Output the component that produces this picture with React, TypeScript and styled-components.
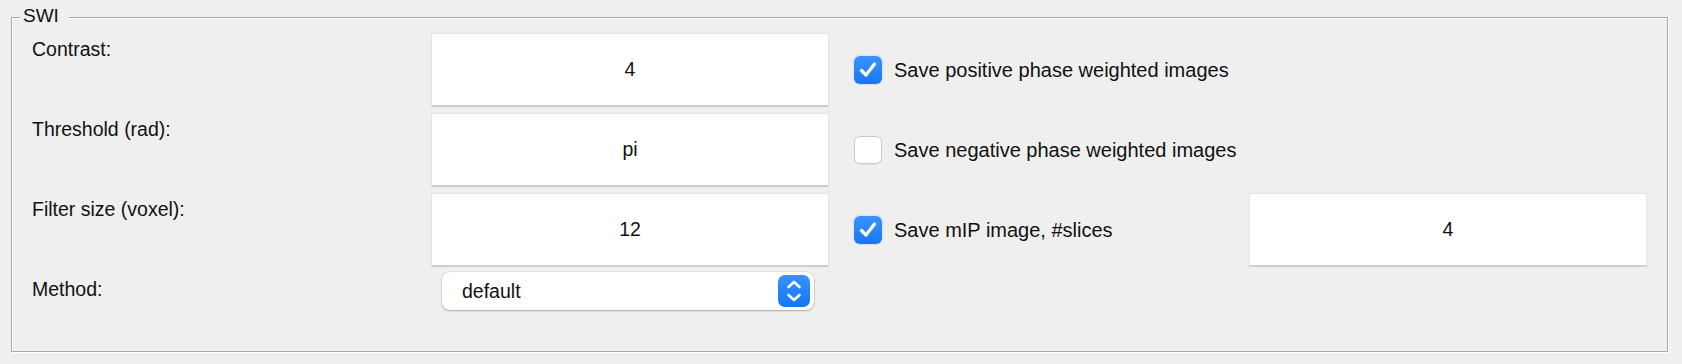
import React from "react";
import styled, { createGlobalStyle } from "styled-components";

const Global = createGlobalStyle`
  html, body { margin: 0; padding: 0; background: #efefef; }
  body { font-family: "Liberation Sans", Arial, sans-serif; color: #111; }
`;

const Page = styled.div`
  width: 1682px;
  height: 364px;
  padding: 17px 0 0 11px;
  box-sizing: border-box;
  background: #efefef;
`;

const Frame = styled.section`
  position: relative;
  width: 1657px;
  height: 335px;
  box-sizing: border-box;
  border: 1px solid #a9a9a9;
  box-shadow: 1px 1px 0 #ffffff, inset 1px 1px 0 #ffffff;
  padding: 15px 19px 0 20px;
`;

const Legend = styled.span`
  position: absolute;
  top: -13px;
  left: 8px;
  padding: 0 10px 0 3px;
  background: #efefef;
  font-size: 19px;
  line-height: 22px;
  color: #111;
`;

const Grid = styled.div`
  display: grid;
  grid-template-columns: 399px 398px 420px 398px;
  grid-auto-rows: 74px;
  row-gap: 6px;
  & > :nth-child(4n + 3) {
    padding-left: 25px;
  }
`;

const Label = styled.div`
  font-size: 19.5px;
  line-height: 24px;
  padding-top: 4px;
`;

const Field = styled.div`
  background: #fff;
  border: 1px solid #e2e2e2;
  border-bottom: 2px solid #cfcfcf;
  box-sizing: border-box;
  display: flex;
  align-items: center;
  justify-content: center;
  font-size: 19.5px;
  color: #111;
`;

const Empty = styled.div``;

const CheckRow = styled.label`
  display: flex;
  align-items: center;
  gap: 12px;
  font-size: 20px;
  color: #111;
`;

const Box = styled.span<{ $on: boolean }>`
  width: 28px;
  height: 28px;
  flex: none;
  box-sizing: border-box;
  border-radius: 6px;
  display: flex;
  align-items: center;
  justify-content: center;
  background: ${(p) => (p.$on ? "linear-gradient(#3b93ff, #1677f5)" : "#fff")};
  border: ${(p) => (p.$on ? "none" : "1px solid #c9c9c9")};
  box-shadow: ${(p) => (p.$on ? "0 0 2px rgba(20,110,240,0.35)" : "0 1px 1px rgba(0,0,0,0.05)")};
`;

const SelectWrap = styled.div`
  align-self: start;
  margin: -1px 0 0 11px;
  width: 372px;
  height: 38px;
  box-sizing: border-box;
  background: #fff;
  border-radius: 8px;
  box-shadow: 0 0 0 0.5px rgba(0, 0, 0, 0.12), 0 1px 2px rgba(0, 0, 0, 0.25);
  display: flex;
  align-items: center;
  justify-content: space-between;
  padding: 0 4px 0 20px;
  font-size: 19.5px;
  color: #111;
`;

const Stepper = styled.span`
  width: 32px;
  height: 32px;
  border-radius: 7px;
  background: linear-gradient(#3a92ff, #1575f5);
  display: flex;
  align-items: center;
  justify-content: center;
`;

const Check = () => (
  <svg width="20" height="20" viewBox="0 0 20 20">
    <path d="M3.5 10.5 L8 15 L16.5 4" fill="none" stroke="#fff" strokeWidth="3.2" strokeLinecap="round" strokeLinejoin="round" />
  </svg>
);

const Chevrons = () => (
  <svg width="20" height="26" viewBox="0 0 20 26">
    <path d="M4.5 9 L10 4 L15.5 9" fill="none" stroke="#fff" strokeWidth="2.6" strokeLinecap="round" strokeLinejoin="round" />
    <path d="M4.5 17 L10 22 L15.5 17" fill="none" stroke="#fff" strokeWidth="2.6" strokeLinecap="round" strokeLinejoin="round" />
  </svg>
);

const CheckItem = ({ on, text }: { on: boolean; text: string }) => (
  <CheckRow>
    <Box $on={on}>{on && <Check />}</Box>
    {text}
  </CheckRow>
);

export default function App() {
  return (
    <>
      <Global />
      <Page>
        <Frame>
          <Legend>SWI</Legend>
          <Grid>
            <Label>Contrast:</Label>
            <Field>4</Field>
            <CheckItem on text="Save positive phase weighted images" />
            <Empty />

            <Label>Threshold (rad):</Label>
            <Field>pi</Field>
            <CheckItem on={false} text="Save negative phase weighted images" />
            <Empty />

            <Label>Filter size (voxel):</Label>
            <Field>12</Field>
            <CheckItem on text="Save mIP image, #slices" />
            <Field>4</Field>

            <Label>Method:</Label>
            <SelectWrap>
              default
              <Stepper>
                <Chevrons />
              </Stepper>
            </SelectWrap>
            <Empty />
            <Empty />
          </Grid>
        </Frame>
      </Page>
    </>
  );
}
